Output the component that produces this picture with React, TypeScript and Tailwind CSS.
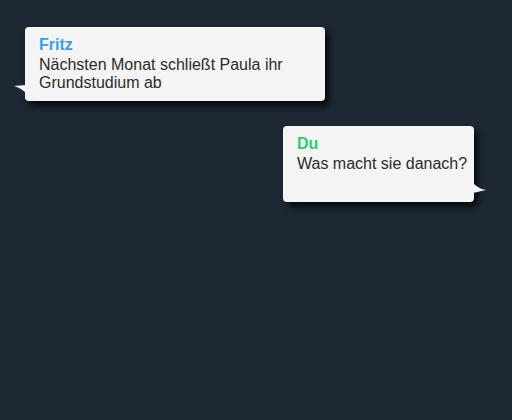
export default function App() {
  return (
    <div
      className="h-[420px] w-[512px] bg-[#1e2834] pt-[27px]"
      style={{ fontFamily: '"Liberation Sans", Arial, sans-serif' }}
    >
      <div className="flex flex-col gap-[25px]">
        <div className="flex justify-start pl-[25px]">
          <div className="relative w-[300px] rounded-[4px] bg-[#f4f4f4] px-[14px] pt-[9px] pb-[9px] shadow-[4px_5px_7px_rgba(0,0,0,0.8)]">
            <svg className="absolute -left-[11px] bottom-[8px]" width="12" height="8" viewBox="0 0 12 8">
              <path d="M12 0 L0 1 Q7 3 12 8 Z" fill="#f4f4f4" />
            </svg>
            <div className="text-[16px] font-bold leading-[18px] text-[#3a9ee4]">Fritz</div>
            <p className="mt-[2px] text-[16px] leading-[18px] text-[#2b2b2b]">
              Nächsten Monat schließt Paula ihr Grundstudium ab
            </p>
          </div>
        </div>
        <div className="flex justify-end pr-[38px]">
          <div className="relative h-[76px] w-[191px] rounded-[4px] bg-[#f4f4f4] pl-[14px] pt-[9px] shadow-[4px_5px_7px_rgba(0,0,0,0.8)]">
            <svg className="absolute -right-[12px] bottom-[9px]" width="13" height="10" viewBox="0 0 13 10">
              <path d="M0 0 Q6 6 13 7 L0 10 Z" fill="#f4f4f4" />
            </svg>
            <div className="text-[16px] font-bold leading-[18px] text-[#2ecc71]">Du</div>
            <p className="mt-[2px] whitespace-nowrap text-[16px] leading-[18px] text-[#2b2b2b]">
              Was macht sie danach?
            </p>
          </div>
        </div>
      </div>
    </div>
  );
}
